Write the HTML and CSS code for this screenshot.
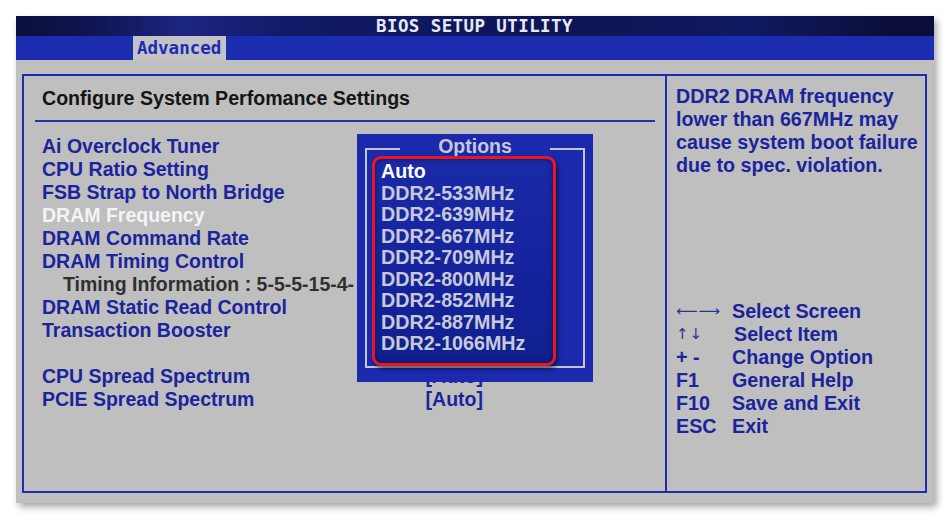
FILE: index.html
```html
<!DOCTYPE html>
<html>
<head>
<meta charset="utf-8">
<link rel="stylesheet" href="styles.css">
</head>
<body>
<div class="screen">
  <div class="titlebar"><span class="title">BIOS SETUP UTILITY</span></div>
  <div class="tabbar"><span class="tab">Advanced</span></div>
  <div class="main">
    <div class="frame">
      <div class="left">
        <div class="heading"><span>Configure System Perfomance Settings</span></div>
        <ul class="items">
          <li>Ai Overclock Tuner</li>
          <li>CPU Ratio Setting</li>
          <li>FSB Strap to North Bridge</li>
          <li class="sel">DRAM Frequency</li>
          <li>DRAM Command Rate</li>
          <li>DRAM Timing Control</li>
          <li class="info">Timing Information : 5-5-5-15-4-</li>
          <li>DRAM Static Read Control</li>
          <li>Transaction Booster</li>
          <li class="blank"></li>
          <li class="row"><span>CPU Spread Spectrum</span><span class="val">[Auto]</span></li>
          <li class="row"><span>PCIE Spread Spectrum</span><span class="val">[Auto]</span></li>
        </ul>
        <div class="popup">
          <div class="opt-head"><span class="opt-title">Options</span></div>
          <div class="opt-body">
            <ul class="opt-list">
              <li class="cur">Auto</li>
              <li>DDR2-533MHz</li>
              <li>DDR2-639MHz</li>
              <li>DDR2-667MHz</li>
              <li>DDR2-709MHz</li>
              <li>DDR2-800MHz</li>
              <li>DDR2-852MHz</li>
              <li>DDR2-887MHz</li>
              <li>DDR2-1066MHz</li>
            </ul>
          </div>
        </div>
      </div>
      <div class="right">
        <p class="help">DDR2 DRAM frequency lower than 667MHz may cause system boot failure due to spec. violation.</p>
        <div class="legend">
          <div class="k thin">&#x27F5;&#x27F6;</div><div class="d">Select Screen</div>
          <div class="k thin">&#x2191;&#x2193;</div><div class="d shift">Select Item</div>
          <div class="k">+ -</div><div class="d">Change Option</div>
          <div class="k">F1</div><div class="d">General Help</div>
          <div class="k">F10</div><div class="d">Save and Exit</div>
          <div class="k">ESC</div><div class="d">Exit</div>
        </div>
      </div>
    </div>
  </div>
</div>
</body>
</html>
```
FILE: styles.css
```css
* { box-sizing: border-box; }
html, body { margin: 0; padding: 0; background: #ffffff; }
body { padding: 16px; font-family: "Liberation Sans", Arial, sans-serif; }

.screen {
  width: 918px;
  height: 487px;
  display: flex;
  flex-direction: column;
  box-shadow: 3px 4px 7px rgba(0,0,0,0.35);
}

.titlebar {
  height: 20px;
  background: linear-gradient(90deg, #0b0f3e 0%, #0e1450 8%, #1b2583 18%, #111a66 30%, #0d1554 60%, #101a62 80%, #0a0d38 96%, #0a0d38 100%);
  display: flex;
  justify-content: center;
  align-items: center;
}
.title {
  font-family: "DejaVu Sans Mono", monospace;
  font-weight: bold;
  font-size: 17.5px;
  letter-spacing: 0.4px;
  color: #e6e8f2;
  line-height: 20px;
  padding-right: 1px;
}

.tabbar {
  height: 24px;
  background: #1c2cae;
  padding-left: 117px;
  display: flex;
}
.tab {
  width: 93px;
  background: #c3c3c5;
  color: #1c2cb4;
  font-family: "DejaVu Sans Mono", monospace;
  font-weight: bold;
  font-size: 17.5px;
  letter-spacing: 0;
  line-height: 24px;
  padding-left: 4px;
}

.main {
  flex: 1;
  background: #bfbfbf;
  padding: 14px 7px 10px 6px;
  display: flex;
}
.frame {
  flex: 1;
  border: 2px solid #1e2cae;
  display: flex;
}

.left {
  position: relative;
  width: 643px;
  border-right: 2px solid #1e2cae;
  padding: 10px 10px 0 11px;
}
.heading {
  border-bottom: 2px solid #2233aa;
  padding: 0 0 10px 7px;
  font-weight: bold;
  font-size: 19.6px;
  line-height: 24px;
  color: #151515;
}

.items {
  list-style: none;
  margin: 13px 0 0 0;
  padding: 0 0 0 7px;
  font-weight: bold;
  font-size: 19.5px;
  line-height: 23px;
  color: #1b249c;
}
.items li { height: 23px; white-space: nowrap; }
.items .sel { color: #f4f4f8; }
.items .info { color: #303030; padding-left: 21px; }
.items .row { display: flex; }
.items .row .val { margin-left: auto; margin-right: 172px; }

.popup {
  position: absolute;
  left: 333px;
  top: 58px;
  width: 236px;
  height: 248px;
  background: #1b2aad;
  padding: 0 8px 14px 8px;
  display: flex;
  flex-direction: column;
}
.opt-head {
  height: 24px;
  display: flex;
  align-items: center;
}
.opt-head::before, .opt-head::after {
  content: "";
  flex: 1;
  height: 2px;
  margin-top: 6px;
  background: #c4c6d8;
}
.opt-title {
  padding: 0 38px;
  font-weight: bold;
  font-size: 19.5px;
  color: #c6c8d6;
  line-height: 24px;
}
.opt-body {
  flex: 1;
  margin-top: -8px;
  border: 2px solid #c4c6d8;
  border-top: none;
  padding: 6px 27px 0 5px;
  display: flex;
}
.opt-list {
  flex: 1;
  list-style: none;
  margin: 0;
  padding: 2px 0 0 6px;
  border: 3px solid #ea1520;
  border-radius: 9px;
  background: linear-gradient(180deg, #1a2aa8 0%, #14239c 60%, #10208e 100%);
  box-shadow: 2px 3px 4px rgba(0,0,0,0.55), inset 0 0 6px rgba(0,0,30,0.45);
  font-weight: bold;
  font-size: 19.7px;
  line-height: 21.5px;
  color: #c8c9d6;
}
.opt-list li { white-space: nowrap; }
.opt-list .cur { color: #ffffff; }

.right {
  flex: 1;
  padding: 9px 4px 0 9px;
  color: #1b249c;
  font-weight: bold;
  font-size: 19.7px;
  line-height: 23px;
}
.help { margin: 0; }
.legend {
  margin-top: 123px;
  display: grid;
  grid-template-columns: 56px 1fr;
}
.legend .k, .legend .d { height: 23px; white-space: nowrap; }
.legend .thin {
  font-family: "DejaVu Sans", sans-serif;
  font-weight: normal;
  font-size: 15px;
  color: #2a3290;
  letter-spacing: 1px;
}
.legend .shift { padding-left: 2px; }
```
